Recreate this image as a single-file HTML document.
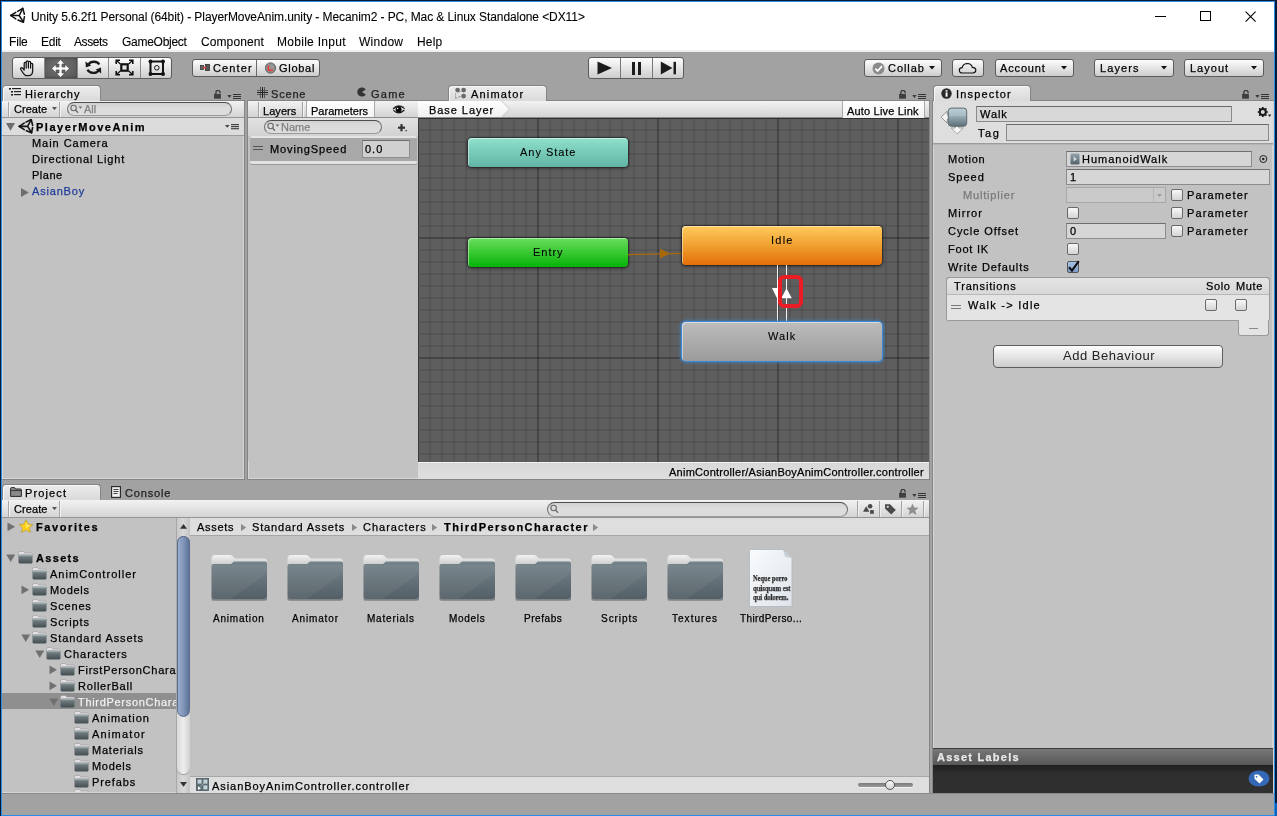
<!DOCTYPE html>
<html><head><meta charset="utf-8"><style>
html,body{margin:0;padding:0;width:1277px;height:816px;overflow:hidden;background:#a2a2a2}
body>div,body>span,body>svg{position:absolute;box-sizing:border-box}
.t{white-space:nowrap;line-height:normal;font-family:"Liberation Sans",sans-serif;will-change:transform;-webkit-text-stroke:0.25px currentColor}
</style></head><body>
<div style="left:0px;top:0px;width:1277px;height:816px;background:#0b1a2e"></div>
<div style="left:1px;top:1px;width:1274px;height:815px;background:#2a8be8"></div>
<div style="left:2px;top:2px;width:1272px;height:813px;background:#a2a2a2"></div>
<div style="left:1275px;top:0px;width:2px;height:816px;background:#031a38"></div>
<div style="left:1275px;top:803px;width:2px;height:13px;background:#0a62bd"></div>
<div style="left:2px;top:2px;width:1272px;height:48px;background:#ffffff"></div>
<div style="left:2px;top:50px;width:1272px;height:2px;background:#efefef"></div>
<svg style="left:9px;top:7px;" width="18" height="18" viewBox="0 0 18 18"><g fill="none" stroke="#111" stroke-width="1.5" stroke-linejoin="round" stroke-linecap="round"><path d="M8.6 4.4 L13.8 1.4 L15.4 7.3"/><path d="M15.4 9.8 L14.4 15.2 L9 13"/><path d="M6.8 11.9 L1.7 8.5 L6.8 5.3"/><path d="M1.7 8.5 H10.2 L13.8 1.4 M10.2 8.5 L14.4 15.2"/></g></svg>
<span class="t" style="left:31.00px;top:10px;font-size:12px;font-weight:400;color:#000;letter-spacing:-0.082px;-webkit-text-stroke:0.1px #000;">Unity 5.6.2f1 Personal (64bit) - PlayerMoveAnim.unity - Mecanim2 - PC, Mac &amp; Linux Standalone &lt;DX11&gt;</span>
<div style="left:1155px;top:16px;width:11px;height:1px;background:#000"></div>
<div style="left:1200px;top:11px;width:11px;height:10px;border:1px solid #000"></div>
<svg style="left:1245px;top:11px;" width="12" height="12" viewBox="0 0 12 12"><path d="M0.6 0.6 L10.6 10.6 M10.6 0.6 L0.6 10.6" stroke="#000" stroke-width="1.1"/></svg>
<span class="t" style="left:8.50px;top:35px;font-size:12px;font-weight:400;color:#000;letter-spacing:-0.181px;-webkit-text-stroke:0.1px #000;">File</span>
<span class="t" style="left:40.90px;top:35px;font-size:12px;font-weight:400;color:#000;letter-spacing:-0.257px;-webkit-text-stroke:0.1px #000;">Edit</span>
<span class="t" style="left:74.40px;top:35px;font-size:12px;font-weight:400;color:#000;letter-spacing:-0.420px;-webkit-text-stroke:0.1px #000;">Assets</span>
<span class="t" style="left:122.00px;top:35px;font-size:12px;font-weight:400;color:#000;letter-spacing:-0.272px;-webkit-text-stroke:0.1px #000;">GameObject</span>
<span class="t" style="left:200.50px;top:35px;font-size:12px;font-weight:400;color:#000;letter-spacing:0.096px;-webkit-text-stroke:0.1px #000;">Component</span>
<span class="t" style="left:276.90px;top:35px;font-size:12px;font-weight:400;color:#000;letter-spacing:0.286px;-webkit-text-stroke:0.1px #000;">Mobile Input</span>
<span class="t" style="left:359.00px;top:35px;font-size:12px;font-weight:400;color:#000;letter-spacing:0.262px;-webkit-text-stroke:0.1px #000;">Window</span>
<span class="t" style="left:416.60px;top:35px;font-size:12px;font-weight:400;color:#000;letter-spacing:0.204px;-webkit-text-stroke:0.1px #000;">Help</span>
<div style="left:12px;top:57px;width:160px;height:22px;border:1px solid #5c5c5c;border-radius:3px;background:linear-gradient(#fdfdfd,#cdcdcd);"></div>
<div style="left:44px;top:58px;width:33px;height:20px;background:radial-gradient(ellipse at 50% 45%,#747474,#5e5e5e 70%,#555);box-shadow:inset 0 0 2px #333"></div>
<div style="left:44px;top:58px;width:1px;height:20px;background:#8a8a8a"></div>
<div style="left:77px;top:58px;width:1px;height:20px;background:#8a8a8a"></div>
<div style="left:108px;top:58px;width:1px;height:20px;background:#8a8a8a"></div>
<div style="left:140px;top:58px;width:1px;height:20px;background:#8a8a8a"></div>
<svg style="left:19px;top:59px;" width="18" height="18" viewBox="0 0 18 18"><path d="M6.5 16.5 C5 15.5 3.2 13 1.8 10.5 C1 9.2 2.4 8 3.6 9.2 L5.2 11 L5.2 4.5 C5.2 3 7.2 3 7.2 4.5 L7.2 9 L7.2 3 C7.2 1.5 9.4 1.5 9.4 3 L9.4 9 L9.4 3.5 C9.4 2 11.6 2 11.6 3.5 L11.6 9 L11.6 5.3 C11.6 4 13.7 4 13.7 5.3 L13.7 11 C13.7 14 12.7 16.5 10.2 16.5 Z" fill="none" stroke="#141414" stroke-width="1.25" stroke-linejoin="round"/></svg>
<svg style="left:51px;top:59px;" width="19" height="19" viewBox="0 0 19 19"><path d="M9.5 0.6 L13.8 5 L11 5 L11 8 L14 8 L14 5.2 L18.4 9.5 L14 13.8 L14 11 L11 11 L11 14 L13.8 14 L9.5 18.4 L5.2 14 L8 14 L8 11 L5 11 L5 13.8 L0.6 9.5 L5 5.2 L5 8 L8 8 L8 5 L5.2 5 Z" fill="#fafafa" stroke="#3c3c3c" stroke-width="0.6"/></svg>
<svg style="left:85px;top:60px;" width="17" height="15" viewBox="0 0 17 15"><g fill="none" stroke="#1a1a1a" stroke-width="2.3"><path d="M14.2 4.6 C12.6 1.2 5.8 0.4 3.4 4.6"/><path d="M2.6 9.6 C4.2 13.6 11.6 14.2 13.6 10.2"/></g><path d="M0.4 1.6 L0.9 7.4 L6.2 5.6 Z" fill="#1a1a1a"/><path d="M16.2 13.6 L16 7.6 L10.8 9.6 Z" fill="#1a1a1a"/></svg>
<svg style="left:115px;top:59px;" width="19" height="17" viewBox="0 0 19 17"><rect x="6.3" y="5.3" width="6.4" height="6.4" fill="#e4e4e4" stroke="#111" stroke-width="2.2"/><g stroke="#111" stroke-width="1.3" fill="none"><path d="M2 2 L5.4 5"/><path d="M17 2 L13.6 5"/><path d="M2 15 L5.4 12"/><path d="M17 15 L13.6 12"/></g><g stroke="#111" stroke-width="1.6" fill="none"><path d="M1.2 5 V1.2 H5"/><path d="M14 1.2 H17.8 V5"/><path d="M1.2 12 V15.8 H5"/><path d="M14 15.8 H17.8 V12"/></g></svg>
<svg style="left:148px;top:59px;" width="18" height="18" viewBox="0 0 18 18"><g stroke="#111" stroke-width="2" fill="none"><path d="M2.5 2.5 H15"/><path d="M2.5 15 H15"/><path d="M2.5 2.5 V15"/><path d="M15 2.5 V15"/></g><circle cx="8.8" cy="8.8" r="2.3" fill="none" stroke="#111" stroke-width="1"/><g fill="#111"><circle cx="2.5" cy="2.5" r="2"/><circle cx="15" cy="2.5" r="2"/><circle cx="2.5" cy="15" r="2"/><circle cx="15" cy="15" r="2"/></g></svg>
<div style="left:192px;top:59px;width:128px;height:18px;border:1px solid #5c5c5c;border-radius:3px;background:linear-gradient(#fdfdfd,#cdcdcd);"></div>
<div style="left:256px;top:60px;width:1px;height:16px;background:#6a6a6a"></div>
<svg style="left:200px;top:64px;" width="10" height="7" viewBox="0 0 10 7"><rect x="0.5" y="1.5" width="3" height="4" fill="#666" stroke="#333" stroke-width="0.8"/><rect x="5.5" y="0.4" width="4" height="6.2" fill="#555" stroke="#333" stroke-width="0.8"/><rect x="3.4" y="2.8" width="2.6" height="1.6" fill="#e33"/></svg>
<span class="t" style="left:212.50px;top:62px;font-size:11px;font-weight:400;color:#000;letter-spacing:1.114px;">Center</span>
<svg style="left:265px;top:62px;" width="12" height="12" viewBox="0 0 12 12"><circle cx="5.5" cy="6" r="5.2" fill="#8a8a8a" stroke="#555" stroke-width="0.8"/><path d="M2 4 H9 M2 6 H9 M2 8 H9 M4 1.5 V10.5 M7 1.5 V10.5" stroke="#aaa" stroke-width="0.5"/><path d="M3.4 3.2 V8.2 H8" fill="none" stroke="#e33" stroke-width="1.4"/></svg>
<span class="t" style="left:279.30px;top:62px;font-size:11px;font-weight:400;color:#000;letter-spacing:0.718px;">Global</span>
<div style="left:588px;top:57px;width:96px;height:22px;border:1px solid #5c5c5c;border-radius:3px;background:linear-gradient(#fdfdfd,#cdcdcd);"></div>
<div style="left:620px;top:58px;width:1px;height:20px;background:#777"></div>
<div style="left:652px;top:58px;width:1px;height:20px;background:#777"></div>
<svg style="left:596px;top:60px;" width="18" height="16" viewBox="0 0 18 16"><path d="M1.5 1.5 L16 8 L1.5 14.5 Z" fill="#1c1c1c"/></svg>
<div style="left:632px;top:62px;width:3px;height:13px;background:#1c1c1c"></div>
<div style="left:638px;top:62px;width:3px;height:13px;background:#1c1c1c"></div>
<svg style="left:660px;top:60px;" width="17" height="16" viewBox="0 0 17 16"><path d="M0.8 1.5 L12.5 8 L0.8 14.5 Z" fill="#1c1c1c"/><rect x="13.5" y="1.8" width="2.5" height="12.5" fill="#1c1c1c"/></svg>
<div style="left:864px;top:59px;width:78px;height:18px;border:1px solid #5c5c5c;border-radius:3px;background:linear-gradient(#fdfdfd,#cdcdcd);"></div>
<svg style="left:872px;top:62px;" width="13" height="13" viewBox="0 0 13 13"><circle cx="6.5" cy="6.5" r="6" fill="#8a8a8a"/><path d="M3.3 6.6 L5.6 9 L10 4.2" fill="none" stroke="#fff" stroke-width="1.8"/></svg>
<span class="t" style="left:887.80px;top:62px;font-size:11px;font-weight:400;color:#000;letter-spacing:0.943px;">Collab</span>
<svg style="left:929px;top:66px;" width="6" height="4" viewBox="0 0 6 4"><path d="M0 0 H6 L3 3.5 Z" fill="#111"/></svg>
<div style="left:952px;top:59px;width:32px;height:18px;border:1px solid #5c5c5c;border-radius:3px;background:linear-gradient(#fdfdfd,#cdcdcd);"></div>
<svg style="left:958px;top:61px;" width="20" height="14" viewBox="0 0 20 14"><path d="M4.5 12 Q1.2 12 1.3 9 Q1.5 6.6 4.2 6.6 Q5 2.5 9.5 2.5 Q13.5 2.6 14.3 6.4 Q17.8 6.6 17.8 9.3 Q17.6 12 14.8 12 Z" fill="none" stroke="#111" stroke-width="1.2"/></svg>
<div style="left:995px;top:59px;width:79px;height:18px;border:1px solid #5c5c5c;border-radius:3px;background:linear-gradient(#fdfdfd,#cdcdcd);"></div>
<span class="t" style="left:1000.40px;top:62px;font-size:11px;font-weight:400;color:#000;letter-spacing:0.853px;">Account</span>
<svg style="left:1061px;top:66px;" width="6" height="4" viewBox="0 0 6 4"><path d="M0 0 H6 L3 3.5 Z" fill="#111"/></svg>
<div style="left:1094px;top:59px;width:80px;height:18px;border:1px solid #5c5c5c;border-radius:3px;background:linear-gradient(#fdfdfd,#cdcdcd);"></div>
<span class="t" style="left:1099.50px;top:62px;font-size:11px;font-weight:400;color:#000;letter-spacing:1.074px;">Layers</span>
<svg style="left:1161px;top:66px;" width="6" height="4" viewBox="0 0 6 4"><path d="M0 0 H6 L3 3.5 Z" fill="#111"/></svg>
<div style="left:1184px;top:59px;width:80px;height:18px;border:1px solid #5c5c5c;border-radius:3px;background:linear-gradient(#fdfdfd,#cdcdcd);"></div>
<span class="t" style="left:1190.00px;top:62px;font-size:11px;font-weight:400;color:#000;letter-spacing:1.007px;">Layout</span>
<svg style="left:1251px;top:66px;" width="6" height="4" viewBox="0 0 6 4"><path d="M0 0 H6 L3 3.5 Z" fill="#111"/></svg>
<div style="left:1px;top:100px;width:244px;height:380px;background:#858585"></div>
<div style="left:2px;top:101px;width:242px;height:378px;background:#d6d6d6"></div>
<div style="left:3px;top:102px;width:240px;height:376px;background:#c2c2c2"></div>
<div style="left:2px;top:101px;width:242px;height:16px;background:linear-gradient(#f2f2f2,#d4d4d4);"></div>
<div style="left:2px;top:117px;width:242px;height:1px;background:#959595"></div>
<div style="left:2px;top:85px;width:99px;height:16px;background:linear-gradient(#ececec,#dadada);border:1px solid #858585;border-bottom:none;border-radius:4px 4px 0 0;box-shadow:inset 1px 1px 0 #f8f8f8"></div>
<div style="left:247px;top:100px;width:683px;height:380px;background:#858585"></div>
<div style="left:248px;top:101px;width:681px;height:378px;background:#d6d6d6"></div>
<div style="left:249px;top:102px;width:679px;height:376px;background:#c2c2c2"></div>
<div style="left:932px;top:100px;width:342px;height:694px;background:#858585"></div>
<div style="left:933px;top:101px;width:340px;height:692px;background:#d6d6d6"></div>
<div style="left:934px;top:102px;width:338px;height:690px;background:#c2c2c2"></div>
<div style="left:1273px;top:101px;width:1px;height:692px;background:#d8d0c8"></div>
<div style="left:1px;top:500px;width:929px;height:294px;background:#858585"></div>
<div style="left:2px;top:501px;width:927px;height:292px;background:#d6d6d6"></div>
<div style="left:3px;top:502px;width:925px;height:290px;background:#c2c2c2"></div>
<svg style="left:9px;top:88px;" width="13" height="9" viewBox="0 0 13 9"><g fill="#222"><rect x="0" y="0" width="2" height="1.6"/><rect x="3" y="0" width="9" height="1.2"/><rect x="2" y="3" width="2" height="1.6"/><rect x="5" y="3" width="7" height="1.2"/><rect x="2" y="6" width="2" height="1.6"/><rect x="5" y="6" width="7" height="1.2"/></g></svg>
<span class="t" style="left:24.90px;top:88px;font-size:11px;font-weight:400;color:#000;letter-spacing:0.917px;">Hierarchy</span>
<svg style="left:214px;top:90px;" width="9" height="10" viewBox="0 0 9 10"><path d="M1.9 4 V2.6 Q1.9 0.4 4 0.4 Q6.1 0.4 6.1 2.6 V3.3" fill="none" stroke="#3a3a3a" stroke-width="1.3"/><rect x="0.1" y="3.9" width="6.8" height="4.8" fill="#3f3f3f"/></svg>
<svg style="left:227px;top:94px;" width="15" height="6" viewBox="0 0 15 6"><path d="M0.3 1 H4.5 L2.4 3.9 Z" fill="#3a3a3a"/><rect x="6" y="0" width="8" height="1" fill="#333"/><rect x="6" y="2" width="8" height="1" fill="#333"/><rect x="6" y="4" width="8" height="1" fill="#333"/></svg>
<svg style="left:257px;top:87px;" width="12" height="11" viewBox="0 0 12 11"><g fill="#555"><rect x="3" y="0" width="1" height="11"/><rect x="7" y="0" width="1" height="11"/><rect x="0" y="3" width="11" height="1"/><rect x="0" y="7" width="11" height="1"/></g><g fill="#222"><rect x="5" y="0" width="1" height="11"/><rect x="0" y="5" width="11" height="1"/></g></svg>
<span class="t" style="left:271.10px;top:88px;font-size:11px;font-weight:400;color:#222;letter-spacing:0.820px;">Scene</span>
<svg style="left:357px;top:87px;" width="10" height="10" viewBox="0 0 10 10"><path d="M8.8 2.6 A4.6 4.6 0 1 0 8.8 7.4 L5 5 Z" fill="#333"/></svg>
<span class="t" style="left:371.00px;top:88px;font-size:11px;font-weight:400;color:#222;letter-spacing:1.244px;">Game</span>
<div style="left:448px;top:85px;width:99px;height:16px;background:linear-gradient(#ececec,#dadada);border:1px solid #858585;border-bottom:none;border-radius:4px 4px 0 0;box-shadow:inset 1px 1px 0 #f8f8f8"></div>
<svg style="left:455px;top:87px;" width="13" height="12" viewBox="0 0 13 12"><g fill="#6a6a6a"><circle cx="2.6" cy="3.1" r="2.4"/><circle cx="8.6" cy="3.1" r="2.4"/><circle cx="8.6" cy="9.1" r="2.4"/></g><path d="M0.6 6 L0.6 11.6 L5.3 8.8" fill="none" stroke="#777" stroke-width="0.8" stroke-dasharray="1 0.6"/><path d="M3.5 5.8 L6.5 3.6 M3.8 11 L6 9" stroke="#999" stroke-width="0.7"/></svg>
<span class="t" style="left:471.10px;top:88px;font-size:11px;font-weight:400;color:#000;letter-spacing:1.167px;">Animator</span>
<svg style="left:899px;top:90px;" width="9" height="10" viewBox="0 0 9 10"><path d="M1.9 4 V2.6 Q1.9 0.4 4 0.4 Q6.1 0.4 6.1 2.6 V3.3" fill="none" stroke="#3a3a3a" stroke-width="1.3"/><rect x="0.1" y="3.9" width="6.8" height="4.8" fill="#3f3f3f"/></svg>
<svg style="left:912px;top:94px;" width="15" height="6" viewBox="0 0 15 6"><path d="M0.3 1 H4.5 L2.4 3.9 Z" fill="#3a3a3a"/><rect x="6" y="0" width="8" height="1" fill="#333"/><rect x="6" y="2" width="8" height="1" fill="#333"/><rect x="6" y="4" width="8" height="1" fill="#333"/></svg>
<div style="left:933px;top:85px;width:98px;height:16px;background:linear-gradient(#ececec,#dadada);border:1px solid #858585;border-bottom:none;border-radius:4px 4px 0 0;box-shadow:inset 1px 1px 0 #f8f8f8"></div>
<svg style="left:941px;top:88px;" width="11" height="11" viewBox="0 0 11 11"><circle cx="5.5" cy="5.5" r="5.2" fill="#2a2a2a"/><rect x="4.6" y="4.4" width="1.9" height="4.3" fill="#fff"/><rect x="4.6" y="2.2" width="1.9" height="1.5" fill="#fff"/></svg>
<span class="t" style="left:955.80px;top:88px;font-size:11px;font-weight:400;color:#000;letter-spacing:1.177px;">Inspector</span>
<svg style="left:1242px;top:90px;" width="9" height="10" viewBox="0 0 9 10"><path d="M1.9 4 V2.6 Q1.9 0.4 4 0.4 Q6.1 0.4 6.1 2.6 V3.3" fill="none" stroke="#3a3a3a" stroke-width="1.3"/><rect x="0.1" y="3.9" width="6.8" height="4.8" fill="#3f3f3f"/></svg>
<svg style="left:1255px;top:94px;" width="15" height="6" viewBox="0 0 15 6"><path d="M0.3 1 H4.5 L2.4 3.9 Z" fill="#3a3a3a"/><rect x="6" y="0" width="8" height="1" fill="#333"/><rect x="6" y="2" width="8" height="1" fill="#333"/><rect x="6" y="4" width="8" height="1" fill="#333"/></svg>
<div style="left:8px;top:102px;width:1px;height:15px;background:#a6a6a6"></div>
<div style="left:9px;top:102px;width:1px;height:15px;background:#f4f4f4"></div>
<span class="t" style="left:13.50px;top:103px;font-size:11px;font-weight:400;color:#000;letter-spacing:0.034px;">Create</span>
<svg style="left:52px;top:107px;" width="6" height="4" viewBox="0 0 6 4"><path d="M0 0 H5 L2.5 3.2 Z" fill="#555"/></svg>
<div style="left:59px;top:102px;width:1px;height:15px;background:#a6a6a6"></div>
<div style="left:60px;top:102px;width:1px;height:15px;background:#f4f4f4"></div>
<div style="left:67px;top:102px;width:165px;height:14px;border-radius:7.0px;background:linear-gradient(#d2d2d2,#dcdcdc 40%,#dddddd);border:1px solid #6e6e6e;border-top-color:#4e4e4e;border-bottom-color:#9a9a9a"></div>
<svg style="left:70px;top:103px;" width="14" height="12" viewBox="0 0 14 12"><circle cx="3.6" cy="5" r="2.7" fill="none" stroke="#6a6a6a" stroke-width="1.1"/><path d="M5.5 7 L8 9.8" stroke="#6a6a6a" stroke-width="1.3"/><path d="M8.6 3.4 H12.2 L10.4 5.8 Z" fill="#6a6a6a"/></svg>
<span class="t" style="left:83.50px;top:103px;font-size:11px;font-weight:400;color:#808080;">All</span>
<div style="left:2px;top:118px;width:242px;height:17px;background:#dcdcdc"></div>
<div style="left:2px;top:135px;width:242px;height:1px;background:#9a9a9a"></div>
<svg style="left:6px;top:123px;" width="10" height="8" viewBox="0 0 10 8"><path d="M0 0 H9 L4.5 7.8 Z" fill="#6e6e6e"/></svg>
<svg style="left:18px;top:119px;" width="16" height="15" viewBox="0 0 16 15"><g transform="translate(-0.6,-1.3) scale(1.0)"><g fill="none" stroke="#111" stroke-width="1.6" stroke-linejoin="round" stroke-linecap="round"><path d="M8.6 4.4 L13.8 1.8 L15.2 7.6"/><path d="M15.2 9.8 L14.2 15 L9 13"/><path d="M6.8 11.9 L1.8 8.7 L6.8 5.4"/><path d="M1.8 8.7 H10.2 L13.8 1.8 M10.2 8.7 L14.2 15"/></g></g></svg>
<span class="t" style="left:35.80px;top:121px;font-size:11px;font-weight:700;color:#000;letter-spacing:1.532px;">PlayerMoveAnim</span>
<svg style="left:225px;top:124px;" width="15" height="6" viewBox="0 0 15 6"><path d="M0 1 H4.6 L2.3 3.8 Z" fill="#444"/><rect x="6" y="0" width="8" height="1.2" fill="#444"/><rect x="6" y="2" width="8" height="1.2" fill="#444"/><rect x="6" y="4.1" width="8" height="1.2" fill="#444"/></svg>
<span class="t" style="left:32.00px;top:137px;font-size:11px;font-weight:400;color:#000;letter-spacing:0.957px;">Main Camera</span>
<span class="t" style="left:32.00px;top:153px;font-size:11px;font-weight:400;color:#000;letter-spacing:0.837px;">Directional Light</span>
<span class="t" style="left:32.00px;top:169px;font-size:11px;font-weight:400;color:#000;letter-spacing:0.511px;">Plane</span>
<svg style="left:21px;top:188px;" width="8" height="9" viewBox="0 0 8 9"><path d="M0 0 L7.8 4.5 L0 9 Z" fill="#6e6e6e"/></svg>
<span class="t" style="left:32.00px;top:185px;font-size:11px;font-weight:400;color:#1e3c99;letter-spacing:0.814px;">AsianBoy</span>
<div style="left:248px;top:101px;width:681px;height:16px;background:linear-gradient(#f2f2f2,#d4d4d4);"></div>
<div style="left:248px;top:117px;width:681px;height:1px;background:#8e8e8e"></div>
<div style="left:258px;top:102px;width:1px;height:15px;background:#a2a2a2"></div>
<div style="left:259px;top:102px;width:1px;height:15px;background:#f2f2f2"></div>
<span class="t" style="left:263.20px;top:105px;font-size:11px;font-weight:400;color:#000;letter-spacing:0.054px;">Layers</span>
<div style="left:302px;top:102px;width:1px;height:15px;background:#a2a2a2"></div>
<div style="left:303px;top:102px;width:1px;height:15px;background:#f2f2f2"></div>
<div style="left:306px;top:101px;width:69px;height:16px;background:linear-gradient(#ffffff,#f4f4f4);border-left:1px solid #a8a8a8;border-right:1px solid #a8a8a8"></div>
<span class="t" style="left:311.20px;top:105px;font-size:11px;font-weight:400;color:#000;letter-spacing:0.025px;">Parameters</span>
<svg style="left:392px;top:104px;" width="14" height="11" viewBox="0 0 14 11"><path d="M1 5.2 Q6.5 -0.6 12.6 4.6" fill="none" stroke="#111" stroke-width="1.2"/><path d="M1.6 3.6 Q6.5 0.2 12 3.2" fill="none" stroke="#333" stroke-width="0.7"/><path d="M1.4 6.4 Q6.8 11.4 12.4 6" fill="none" stroke="#111" stroke-width="1.1"/><circle cx="6.6" cy="5.4" r="3" fill="#0a0a0a"/><circle cx="5.6" cy="4.5" r="0.8" fill="#fff"/></svg>
<div style="left:248px;top:118px;width:170px;height:343px;background:#c2c2c2"></div>
<div style="left:248px;top:118px;width:170px;height:18px;background:linear-gradient(#e2e2e2,#d2d2d2)"></div>
<div style="left:264px;top:120px;width:118px;height:14px;border-radius:7.0px;background:linear-gradient(#d2d2d2,#dcdcdc 40%,#dddddd);border:1px solid #6e6e6e;border-top-color:#4e4e4e;border-bottom-color:#9a9a9a"></div>
<svg style="left:267px;top:121px;" width="14" height="12" viewBox="0 0 14 12"><circle cx="3.6" cy="5" r="2.7" fill="none" stroke="#6a6a6a" stroke-width="1.1"/><path d="M5.5 7 L8 9.8" stroke="#6a6a6a" stroke-width="1.3"/><path d="M8.6 3.4 H12.2 L10.4 5.8 Z" fill="#6a6a6a"/></svg>
<span class="t" style="left:280.50px;top:121px;font-size:11px;font-weight:400;color:#808080;">Name</span>
<svg style="left:396px;top:122px;" width="12" height="12" viewBox="0 0 12 12"><rect x="2" y="4.6" width="7" height="2.2" fill="#333"/><rect x="4.4" y="2.1" width="2.2" height="7.2" fill="#333"/><rect x="9.4" y="8.1" width="1.6" height="1.1" fill="#333"/></svg>
<div style="left:250px;top:136px;width:167px;height:3px;background:#e4e4e4;border-radius:2px 2px 0 0"></div>
<div style="left:250px;top:138px;width:167px;height:23px;background:#a8a8a8"></div>
<div style="left:253px;top:146px;width:10px;height:1px;background:#555"></div>
<div style="left:253px;top:149px;width:10px;height:1px;background:#555"></div>
<span class="t" style="left:269.50px;top:143px;font-size:11px;font-weight:400;color:#000;letter-spacing:0.899px;">MovingSpeed</span>
<div style="left:362px;top:140px;width:48px;height:18px;background:#d0d0d0;border:1px solid #8c8c8c;border-top-color:#6c6c6c"></div>
<span class="t" style="left:365.00px;top:143px;font-size:11px;font-weight:400;color:#000;letter-spacing:0.994px;">0.0</span>
<div style="left:250px;top:161px;width:167px;height:3px;background:#e2e2e2;border-radius:0 0 2px 2px;box-shadow:0 1px 0 #9a9a9a"></div>
<svg style="left:418px;top:101px;" width="93" height="17" viewBox="0 0 93 17"><defs><linearGradient id="bl" x1="0" y1="0" x2="0" y2="1"><stop offset="0" stop-color="#ffffff"/><stop offset="1" stop-color="#f0f0f0"/></linearGradient></defs><path d="M0 0 H83.5 L91.5 8 L83.5 16 H0 Z" fill="url(#bl)"/><path d="M83.5 0 L91.5 8 L83.5 16" fill="none" stroke="#c8c8c8" stroke-width="1"/></svg>
<span class="t" style="left:428.80px;top:104px;font-size:11px;font-weight:400;color:#000;letter-spacing:0.946px;">Base Layer</span>
<div style="left:842px;top:101px;width:83px;height:17px;background:linear-gradient(#ffffff,#f3f3f3);border-left:1px solid #a8a8a8;border-right:1px solid #a8a8a8"></div>
<span class="t" style="left:847.20px;top:105px;font-size:11px;font-weight:400;color:#000;letter-spacing:0.180px;">Auto Live Link</span>
<div style="left:418px;top:118px;width:511px;height:344px;background-color:#5e5e5e;background-image:linear-gradient(90deg, rgba(0,0,0,0.18) 1px, transparent 1px, transparent 119px, rgba(0,0,0,0.18) 119px),linear-gradient(180deg, rgba(0,0,0,0.18) 1px, transparent 1px, transparent 119px, rgba(0,0,0,0.18) 119px),linear-gradient(90deg, rgba(0,0,0,0.09) 1px, transparent 1px, transparent 11px, rgba(0,0,0,0.09) 11px),linear-gradient(180deg, rgba(0,0,0,0.09) 1px, transparent 1px, transparent 11px, rgba(0,0,0,0.09) 11px);background-size:120px 120px,120px 120px,12px 12px,12px 12px;background-position:0 0, 0 0, 0 0, 0 0"></div>
<div style="left:418px;top:118px;width:511px;height:1px;background:#2e2e2e"></div>
<div style="left:418px;top:118px;width:1px;height:344px;background:#3a3a3a"></div>
<div style="left:418px;top:462px;width:511px;height:17px;background:linear-gradient(#d8d8d8,#dedede);border-top:1px solid #f2f2f2"></div>
<span class="t" style="left:669.40px;top:466px;font-size:11px;font-weight:400;color:#000;letter-spacing:0.254px;">AnimController/AsianBoyAnimController.controller</span>
<div style="left:468px;top:138px;width:160px;height:29px;border-radius:4px;box-shadow:0 0 1px 1px rgba(25,25,25,0.55),0 1px 3px 1px rgba(0,0,0,0.35)"></div>
<div style="left:468px;top:138px;width:160px;height:29px;border-radius:4px;background:linear-gradient(#8fe1cd,#62b4a4);box-shadow:inset 1px 1px 0 rgba(255,255,255,0.45)"></div>
<span class="t" style="left:520.10px;top:146px;font-size:11px;font-weight:400;color:#000;letter-spacing:0.969px;-webkit-text-stroke:0.1px #000;">Any State</span>
<div style="left:468px;top:238px;width:160px;height:29px;border-radius:4px;box-shadow:0 0 1px 1px rgba(25,25,25,0.55),0 1px 3px 1px rgba(0,0,0,0.35)"></div>
<div style="left:468px;top:238px;width:160px;height:29px;border-radius:4px;background:linear-gradient(#6ade5e,#06b306);box-shadow:inset 1px 1px 0 rgba(255,255,255,0.45)"></div>
<span class="t" style="left:533.00px;top:246px;font-size:11px;font-weight:400;color:#000;letter-spacing:0.978px;-webkit-text-stroke:0.1px #000;">Entry</span>
<svg style="left:627px;top:246px;" width="56" height="14" viewBox="0 0 56 14"><path d="M1 8.7 L55 7.3" stroke="#a86a08" stroke-width="1.3"/><path d="M33 2.7 L43 7.4 L33 12.6 Z" fill="#a86a08"/></svg>
<div style="left:682px;top:226px;width:200px;height:39px;border-radius:4px;box-shadow:0 0 1px 1px rgba(25,25,25,0.55),0 1px 3px 1px rgba(0,0,0,0.35)"></div>
<div style="left:682px;top:226px;width:200px;height:39px;border-radius:4px;background:linear-gradient(#ffcb5e,#f0a030 50%,#e46e08);box-shadow:inset 1px 1px 0 rgba(255,255,255,0.45)"></div>
<span class="t" style="left:771.30px;top:234px;font-size:11px;font-weight:400;color:#000;letter-spacing:1.250px;-webkit-text-stroke:0.1px #000;">Idle</span>
<div style="left:777px;top:265px;width:1px;height:57px;background:#f4f4f4"></div>
<div style="left:786px;top:265px;width:1px;height:57px;background:#f4f4f4"></div>
<svg style="left:770px;top:286px;" width="26" height="14" viewBox="0 0 26 14"><path d="M2 2 L12 2 L7 12.3 Z" fill="#fff"/><path d="M16.5 2.3 L21.8 12.3 L11.3 12.3 Z" fill="#fff"/></svg>
<div style="left:778px;top:275px;width:25px;height:33px;border:4.6px solid #ec1c24;border-radius:6px"></div>
<div style="left:681px;top:321px;width:202px;height:41px;border-radius:5px;background:#3b8ad9;box-shadow:0 0 3px 1px rgba(59,138,217,0.6)"></div>
<div style="left:682px;top:322px;width:200px;height:39px;border-radius:4px;background:linear-gradient(#bdbdbd,#9b9b9b);box-shadow:inset 1px 1px 0 rgba(255,255,255,0.45)"></div>
<span class="t" style="left:768.20px;top:330px;font-size:11px;font-weight:400;color:#000;letter-spacing:1.090px;-webkit-text-stroke:0.1px #000;">Walk</span>
<div style="left:933px;top:101px;width:340px;height:42px;background:#dedede"></div>
<div style="left:933px;top:143px;width:340px;height:1px;background:#9c9c9c"></div>
<div style="left:933px;top:144px;width:340px;height:1px;background:#b4b4b4"></div>
<svg style="left:936px;top:103px;" width="36" height="36" viewBox="0 0 36 36"><defs><linearGradient id="ig" x1="0" y1="0" x2="0" y2="1"><stop offset="0" stop-color="#bccfd8"/><stop offset="0.42" stop-color="#a6bac4"/><stop offset="0.48" stop-color="#93a7b1"/><stop offset="1" stop-color="#5d707a"/></linearGradient></defs><path d="M5.1 14.1 L11.2 8.2 L11.2 11.9 L13 11.9 L13 16.3 L11.2 16.3 L11.2 20.2 Z" fill="#f4f4f4" stroke="#8a8a8a" stroke-width="0.9" stroke-linejoin="round"/><path d="M21.2 30.9 L15.2 25 L19.4 25 L19.4 22.5 L22.9 22.5 L22.9 25 L27.3 25 Z" fill="#f8f8f8" stroke="#9a9a9a" stroke-width="0.9" stroke-linejoin="round"/><rect x="12.3" y="5.1" width="18.4" height="18.2" rx="3.2" fill="url(#ig)" stroke="#5e6a70" stroke-width="1"/></svg>
<div style="left:976px;top:106px;width:256px;height:16px;background:#d8d8d8;border:1px solid #8a8a8a;border-top-color:#6a6a6a"></div>
<span class="t" style="left:979.50px;top:108px;font-size:11px;font-weight:400;color:#000;letter-spacing:0.923px;">Walk</span>
<svg style="left:1256px;top:105px;" width="17" height="14" viewBox="0 0 17 14"><g transform="translate(6.8,7)"><circle r="3" fill="none" stroke="#1a1a1a" stroke-width="2"/><g stroke="#1a1a1a" stroke-width="1.7"><path d="M0 -5 V-3"/><path d="M0 5 V3"/><path d="M-5 0 H-3"/><path d="M5 0 H3"/><path d="M-3.6 -3.6 L-2 -2"/><path d="M3.6 3.6 L2 2"/><path d="M-3.6 3.6 L-2 2"/><path d="M3.6 -3.6 L2 -2"/></g></g><path d="M12 9.4 H15.2 L13.6 12 Z" fill="#1a1a1a"/></svg>
<span class="t" style="left:978.10px;top:127px;font-size:11px;font-weight:400;color:#000;letter-spacing:1.525px;">Tag</span>
<div style="left:1006px;top:124px;width:263px;height:17px;background:#d8d8d8;border:1px solid #8a8a8a;border-top-color:#6a6a6a"></div>
<span class="t" style="left:948.00px;top:153px;font-size:11px;font-weight:400;color:#000;letter-spacing:0.714px;">Motion</span>
<span class="t" style="left:948.00px;top:171px;font-size:11px;font-weight:400;color:#000;letter-spacing:0.989px;">Speed</span>
<span class="t" style="left:962.70px;top:189px;font-size:11px;font-weight:400;color:#7a7a7a;letter-spacing:0.811px;">Multiplier</span>
<span class="t" style="left:948.00px;top:207px;font-size:11px;font-weight:400;color:#000;letter-spacing:1.043px;">Mirror</span>
<span class="t" style="left:948.00px;top:225px;font-size:11px;font-weight:400;color:#000;letter-spacing:0.942px;">Cycle Offset</span>
<span class="t" style="left:948.00px;top:243px;font-size:11px;font-weight:400;color:#000;letter-spacing:0.783px;">Foot IK</span>
<span class="t" style="left:948.00px;top:261px;font-size:11px;font-weight:400;color:#000;letter-spacing:0.908px;">Write Defaults</span>
<div style="left:1066px;top:151px;width:186px;height:16px;background:#d6d6d6;border:1px solid #8c8c8c;border-top-color:#6e6e6e;"></div>
<svg style="left:1070px;top:153px;" width="10" height="12" viewBox="0 0 10 12"><defs><linearGradient id="mg" x1="0" y1="0" x2="0" y2="1"><stop offset="0" stop-color="#93a4ac"/><stop offset="1" stop-color="#52616a"/></linearGradient></defs><rect x="0.5" y="0.5" width="9" height="11" rx="1.3" fill="url(#mg)"/><path d="M3.6 3.4 L7 5.9 L3.6 8.4 Z" fill="#d2dadd"/></svg>
<span class="t" style="left:1081.50px;top:153px;font-size:11px;font-weight:400;color:#000;letter-spacing:1.001px;">HumanoidWalk</span>
<svg style="left:1258px;top:154px;" width="10" height="10" viewBox="0 0 10 10"><circle cx="5.3" cy="5" r="3.5" fill="none" stroke="#222" stroke-width="1"/><circle cx="5.3" cy="5" r="1.2" fill="#222"/></svg>
<div style="left:1066px;top:169px;width:204px;height:16px;background:#d6d6d6;border:1px solid #8c8c8c;border-top-color:#6e6e6e;"></div>
<span class="t" style="left:1069.50px;top:171px;font-size:11px;font-weight:400;color:#000;">1</span>
<div style="left:1066px;top:187px;width:100px;height:16px;background:#cacaca;border:1px solid #a8a8a8"></div>
<div style="left:1153px;top:188px;width:1px;height:14px;background:#b6b6b6"></div>
<svg style="left:1157px;top:194px;" width="6" height="4" viewBox="0 0 6 4"><path d="M0 0 H5 L2.5 3 Z" fill="#9a9a9a"/></svg>
<div style="left:1171px;top:189px;width:12px;height:12px;border-radius:2px;border:1px solid #6a6a6a;background:linear-gradient(#f8f8f8,#d4d4d4)"></div>
<span class="t" style="left:1186.70px;top:189px;font-size:11px;font-weight:400;color:#000;letter-spacing:1.153px;">Parameter</span>
<div style="left:1171px;top:207px;width:12px;height:12px;border-radius:2px;border:1px solid #6a6a6a;background:linear-gradient(#f8f8f8,#d4d4d4)"></div>
<span class="t" style="left:1186.70px;top:207px;font-size:11px;font-weight:400;color:#000;letter-spacing:1.153px;">Parameter</span>
<div style="left:1171px;top:225px;width:12px;height:12px;border-radius:2px;border:1px solid #6a6a6a;background:linear-gradient(#f8f8f8,#d4d4d4)"></div>
<span class="t" style="left:1186.70px;top:225px;font-size:11px;font-weight:400;color:#000;letter-spacing:1.153px;">Parameter</span>
<div style="left:1067px;top:207px;width:12px;height:12px;border-radius:2px;border:1px solid #6a6a6a;background:linear-gradient(#f8f8f8,#d4d4d4)"></div>
<div style="left:1066px;top:223px;width:100px;height:16px;background:#d6d6d6;border:1px solid #8c8c8c;border-top-color:#6e6e6e;"></div>
<span class="t" style="left:1069.50px;top:225px;font-size:11px;font-weight:400;color:#000;">0</span>
<div style="left:1067px;top:243px;width:12px;height:12px;border-radius:2px;border:1px solid #6a6a6a;background:linear-gradient(#f8f8f8,#d4d4d4)"></div>
<div style="left:1067px;top:261px;width:12px;height:12px;border-radius:2px;border:1px solid #555;background:linear-gradient(#a9c4ea,#7c9cc8)"></div>
<svg style="left:1066px;top:259px;" width="15" height="15" viewBox="0 0 15 15"><path d="M3 8.2 L6 11.6 L12.8 2.2" fill="none" stroke="#111" stroke-width="2.1"/></svg>
<div style="left:946px;top:277px;width:324px;height:44px;border-radius:3px;background:#9a9a9a"></div>
<div style="left:947px;top:278px;width:322px;height:16px;background:linear-gradient(#e4e4e4,#d8d8d8);border-radius:3px 3px 0 0"></div>
<div style="left:947px;top:294px;width:322px;height:26px;background:#e4e4e4"></div>
<div style="left:947px;top:294px;width:322px;height:1px;background:#b8b8b8"></div>
<span class="t" style="left:953.80px;top:280px;font-size:11px;font-weight:400;color:#000;letter-spacing:0.839px;">Transitions</span>
<span class="t" style="left:1206.30px;top:280px;font-size:11px;font-weight:400;color:#000;letter-spacing:0.656px;">Solo</span>
<span class="t" style="left:1236.30px;top:280px;font-size:11px;font-weight:400;color:#000;letter-spacing:0.610px;">Mute</span>
<div style="left:951px;top:305px;width:10px;height:1px;background:#777"></div>
<div style="left:951px;top:308px;width:10px;height:1px;background:#777"></div>
<span class="t" style="left:968.00px;top:299px;font-size:11px;font-weight:400;color:#000;letter-spacing:1.247px;">Walk -&gt; Idle</span>
<div style="left:1205px;top:299px;width:12px;height:12px;border-radius:2px;border:1px solid #6a6a6a;background:linear-gradient(#f8f8f8,#d4d4d4)"></div>
<div style="left:1235px;top:299px;width:12px;height:12px;border-radius:2px;border:1px solid #6a6a6a;background:linear-gradient(#f8f8f8,#d4d4d4)"></div>
<div style="left:1238px;top:320px;width:31px;height:16px;background:#e4e4e4;border:1px solid #9a9a9a;border-top:none;border-radius:0 0 3px 3px"></div>
<div style="left:1249px;top:328px;width:9px;height:1px;background:#8a8a8a"></div>
<div style="left:993px;top:345px;width:230px;height:23px;border:1px solid #5c5c5c;border-radius:3px;background:linear-gradient(#fdfdfd,#cdcdcd);border-radius:4px;border-color:#5e5e5e"></div>
<span class="t" style="left:1062.70px;top:348px;font-size:13px;font-weight:400;color:#222;letter-spacing:0.516px;-webkit-text-stroke:0;">Add Behaviour</span>
<div style="left:933px;top:748px;width:340px;height:1px;background:#3c3c3c"></div>
<div style="left:933px;top:749px;width:340px;height:16px;background:linear-gradient(#777777,#575757)"></div>
<span class="t" style="left:937.20px;top:751px;font-size:11px;font-weight:700;color:#e8e8e8;letter-spacing:1.245px;">Asset Labels</span>
<div style="left:933px;top:765px;width:340px;height:28px;background:linear-gradient(#1f1f1f,#2e2e2e 30%,#303030)"></div>
<svg style="left:1248px;top:770px;" width="22" height="17" viewBox="0 0 22 17"><ellipse cx="11" cy="8.5" rx="10.5" ry="8" fill="#3569b8"/><path d="M6.5 5.3 V8.8 L11.5 13.5 L15.5 9.5 L10.5 4.6 H7 Z" fill="#fff"/><circle cx="8.6" cy="6.8" r="0.9" fill="#3569b8"/></svg>
<div style="left:2px;top:484px;width:99px;height:16px;background:linear-gradient(#ececec,#dadada);border:1px solid #858585;border-bottom:none;border-radius:4px 4px 0 0;box-shadow:inset 1px 1px 0 #f8f8f8"></div>
<svg style="left:10px;top:487px;" width="12" height="10" viewBox="0 0 12 10"><path d="M0.6 9.4 V1.6 Q0.6 0.6 1.6 0.6 H4.6 L5.6 2 H10.4 Q11.4 2 11.4 3 V9.4 Z" fill="#8a8a8a" stroke="#2a2a2a" stroke-width="1"/><path d="M0.6 3.6 H11.4" stroke="#2a2a2a" stroke-width="0.9"/></svg>
<span class="t" style="left:24.50px;top:487px;font-size:11px;font-weight:400;color:#000;letter-spacing:1.125px;">Project</span>
<svg style="left:111px;top:486px;" width="10" height="12" viewBox="0 0 10 12"><rect x="0.6" y="0.6" width="8.8" height="10.8" fill="#eee" stroke="#222" stroke-width="1.1"/><g fill="#444"><rect x="2.5" y="3" width="5" height="1"/><rect x="2.5" y="5" width="5" height="1"/><rect x="2.5" y="7" width="4" height="1"/></g></svg>
<span class="t" style="left:125.20px;top:487px;font-size:11px;font-weight:400;color:#222;letter-spacing:0.821px;">Console</span>
<svg style="left:899px;top:489px;" width="9" height="10" viewBox="0 0 9 10"><path d="M1.9 4 V2.6 Q1.9 0.4 4 0.4 Q6.1 0.4 6.1 2.6 V3.3" fill="none" stroke="#3a3a3a" stroke-width="1.3"/><rect x="0.1" y="3.9" width="6.8" height="4.8" fill="#3f3f3f"/></svg>
<svg style="left:912px;top:493px;" width="15" height="6" viewBox="0 0 15 6"><path d="M0.3 1 H4.5 L2.4 3.9 Z" fill="#3a3a3a"/><rect x="6" y="0" width="8" height="1" fill="#333"/><rect x="6" y="2" width="8" height="1" fill="#333"/><rect x="6" y="4" width="8" height="1" fill="#333"/></svg>
<div style="left:2px;top:500px;width:927px;height:17px;background:linear-gradient(#f2f2f2,#d4d4d4);"></div>
<div style="left:2px;top:517px;width:927px;height:1px;background:#959595"></div>
<div style="left:8px;top:501px;width:1px;height:16px;background:#a6a6a6"></div>
<div style="left:9px;top:501px;width:1px;height:16px;background:#f4f4f4"></div>
<span class="t" style="left:14.10px;top:503px;font-size:11px;font-weight:400;color:#000;letter-spacing:0.074px;">Create</span>
<svg style="left:52px;top:507px;" width="6" height="4" viewBox="0 0 6 4"><path d="M0 0 H5 L2.5 3.2 Z" fill="#555"/></svg>
<div style="left:59px;top:501px;width:1px;height:16px;background:#a6a6a6"></div>
<div style="left:60px;top:501px;width:1px;height:16px;background:#f4f4f4"></div>
<div style="left:547px;top:502px;width:301px;height:15px;border-radius:7.5px;background:linear-gradient(#d2d2d2,#dcdcdc 40%,#dddddd);border:1px solid #6e6e6e;border-top-color:#4e4e4e;border-bottom-color:#9a9a9a"></div>
<svg style="left:550px;top:503px;" width="14" height="12" viewBox="0 0 14 12"><circle cx="3.6" cy="5" r="2.7" fill="none" stroke="#6a6a6a" stroke-width="1.1"/><path d="M5.5 7 L8 9.8" stroke="#6a6a6a" stroke-width="1.3"/></svg>
<div style="left:857px;top:501px;width:1px;height:16px;background:#a4a4a4"></div>
<div style="left:858px;top:501px;width:1px;height:16px;background:#f0f0f0"></div>
<div style="left:879px;top:501px;width:1px;height:16px;background:#a4a4a4"></div>
<div style="left:880px;top:501px;width:1px;height:16px;background:#f0f0f0"></div>
<div style="left:901px;top:501px;width:1px;height:16px;background:#a4a4a4"></div>
<div style="left:902px;top:501px;width:1px;height:16px;background:#f0f0f0"></div>
<div style="left:923px;top:501px;width:1px;height:16px;background:#a4a4a4"></div>
<div style="left:924px;top:501px;width:1px;height:16px;background:#f0f0f0"></div>
<svg style="left:862px;top:503px;" width="13" height="12" viewBox="0 0 13 12"><path d="M1 8.7 L7.4 8.7 L4.2 3.2 Z" fill="#4a4a4a"/><circle cx="8.1" cy="3.2" r="2.3" fill="#4a4a4a"/><rect x="8.1" y="7.1" width="3.7" height="3.7" fill="#4a4a4a"/></svg>
<svg style="left:884px;top:503px;" width="13" height="13" viewBox="0 0 13 13"><path d="M1 1.2 H6 L11.8 7 L7.2 11.6 L1.2 5.8 Z" fill="#4a4a4a"/><circle cx="3.8" cy="3.8" r="1.1" fill="#ddd"/></svg>
<svg style="left:906px;top:503px;" width="13" height="13" viewBox="0 0 13 13"><path d="M6.5 0.5 L8.2 4.6 L12.6 4.8 L9.2 7.6 L10.4 12 L6.5 9.6 L2.6 12 L3.8 7.6 L0.4 4.8 L4.8 4.6 Z" fill="#8e8e8e"/></svg>
<div style="left:2px;top:518px;width:174px;height:275px;background:#c2c2c2"></div>
<svg style="left:7px;top:522px;" width="9" height="10" viewBox="0 0 9 10"><path d="M0.5 0.5 L8 4.8 L0.5 9.2 Z" fill="#707070"/></svg>
<svg style="left:18px;top:519px;" width="16" height="14" viewBox="0 0 16 14"><path d="M8 0.8 L10.2 5.2 L15 5.6 L11.4 8.8 L12.5 13.4 L8 11 L3.5 13.4 L4.6 8.8 L1 5.6 L5.8 5.2 Z" fill="#ffd21a" stroke="#b89a3a" stroke-width="0.7"/><path d="M8 2.5 L9.5 6 L13 6.3 L8 9 Z" fill="#fff3a0" opacity="0.6"/></svg>
<span class="t" style="left:35.80px;top:521px;font-size:11px;font-weight:700;color:#000;letter-spacing:1.595px;">Favorites</span>
<svg style="left:6px;top:554px;" width="10" height="9" viewBox="0 0 10 9"><path d="M0.3 0.5 H9.2 L4.75 8 Z" fill="#707070"/></svg>
<svg style="left:18px;top:551px;" width="15" height="13" viewBox="0 0 15 13"><defs><linearGradient id="sf" x1="0" y1="0" x2="0" y2="1"><stop offset="0" stop-color="#7c888d"/><stop offset="1" stop-color="#434d52"/></linearGradient></defs><path d="M0.5 2 Q0.5 0.5 2 0.5 H5.5 L6.8 2 H13 Q14.5 2 14.5 3.5 V5 H0.5 Z" fill="#e2e2e2" stroke="#9a9a9a" stroke-width="0.6"/><rect x="0.5" y="3.6" width="14" height="9" rx="1.6" fill="url(#sf)"/><rect x="1.2" y="4.2" width="12.6" height="1" fill="#b8c4c8" opacity="0.7"/></svg>
<span class="t" style="left:35.80px;top:552px;font-size:11px;font-weight:700;color:#000;letter-spacing:1.321px;">Assets</span>
<div style="left:2px;top:693px;width:174px;height:16px;background:#8f8f8f"></div>
<svg style="left:32px;top:567px;" width="15" height="13" viewBox="0 0 15 13"><defs><linearGradient id="sf" x1="0" y1="0" x2="0" y2="1"><stop offset="0" stop-color="#7c888d"/><stop offset="1" stop-color="#434d52"/></linearGradient></defs><path d="M0.5 2 Q0.5 0.5 2 0.5 H5.5 L6.8 2 H13 Q14.5 2 14.5 3.5 V5 H0.5 Z" fill="#e2e2e2" stroke="#9a9a9a" stroke-width="0.6"/><rect x="0.5" y="3.6" width="14" height="9" rx="1.6" fill="url(#sf)"/><rect x="1.2" y="4.2" width="12.6" height="1" fill="#b8c4c8" opacity="0.7"/></svg>
<span class="t" style="left:49.70px;top:568px;font-size:11px;font-weight:400;color:#000;letter-spacing:1.019px;">AnimController</span>
<svg style="left:21px;top:585px;" width="9" height="10" viewBox="0 0 9 10"><path d="M0.5 0.5 L8 4.8 L0.5 9.2 Z" fill="#707070"/></svg>
<svg style="left:32px;top:583px;" width="15" height="13" viewBox="0 0 15 13"><defs><linearGradient id="sf" x1="0" y1="0" x2="0" y2="1"><stop offset="0" stop-color="#7c888d"/><stop offset="1" stop-color="#434d52"/></linearGradient></defs><path d="M0.5 2 Q0.5 0.5 2 0.5 H5.5 L6.8 2 H13 Q14.5 2 14.5 3.5 V5 H0.5 Z" fill="#e2e2e2" stroke="#9a9a9a" stroke-width="0.6"/><rect x="0.5" y="3.6" width="14" height="9" rx="1.6" fill="url(#sf)"/><rect x="1.2" y="4.2" width="12.6" height="1" fill="#b8c4c8" opacity="0.7"/></svg>
<span class="t" style="left:49.70px;top:584px;font-size:11px;font-weight:400;color:#000;letter-spacing:0.686px;">Models</span>
<svg style="left:32px;top:599px;" width="15" height="13" viewBox="0 0 15 13"><defs><linearGradient id="sf" x1="0" y1="0" x2="0" y2="1"><stop offset="0" stop-color="#7c888d"/><stop offset="1" stop-color="#434d52"/></linearGradient></defs><path d="M0.5 2 Q0.5 0.5 2 0.5 H5.5 L6.8 2 H13 Q14.5 2 14.5 3.5 V5 H0.5 Z" fill="#e2e2e2" stroke="#9a9a9a" stroke-width="0.6"/><rect x="0.5" y="3.6" width="14" height="9" rx="1.6" fill="url(#sf)"/><rect x="1.2" y="4.2" width="12.6" height="1" fill="#b8c4c8" opacity="0.7"/></svg>
<span class="t" style="left:49.70px;top:600px;font-size:11px;font-weight:400;color:#000;letter-spacing:0.836px;">Scenes</span>
<svg style="left:32px;top:615px;" width="15" height="13" viewBox="0 0 15 13"><defs><linearGradient id="sf" x1="0" y1="0" x2="0" y2="1"><stop offset="0" stop-color="#7c888d"/><stop offset="1" stop-color="#434d52"/></linearGradient></defs><path d="M0.5 2 Q0.5 0.5 2 0.5 H5.5 L6.8 2 H13 Q14.5 2 14.5 3.5 V5 H0.5 Z" fill="#e2e2e2" stroke="#9a9a9a" stroke-width="0.6"/><rect x="0.5" y="3.6" width="14" height="9" rx="1.6" fill="url(#sf)"/><rect x="1.2" y="4.2" width="12.6" height="1" fill="#b8c4c8" opacity="0.7"/></svg>
<span class="t" style="left:49.70px;top:616px;font-size:11px;font-weight:400;color:#000;letter-spacing:0.879px;">Scripts</span>
<svg style="left:21px;top:634px;" width="10" height="9" viewBox="0 0 10 9"><path d="M0.3 0.5 H9.2 L4.75 8 Z" fill="#707070"/></svg>
<svg style="left:32px;top:631px;" width="15" height="13" viewBox="0 0 15 13"><defs><linearGradient id="sf" x1="0" y1="0" x2="0" y2="1"><stop offset="0" stop-color="#7c888d"/><stop offset="1" stop-color="#434d52"/></linearGradient></defs><path d="M0.5 2 Q0.5 0.5 2 0.5 H5.5 L6.8 2 H13 Q14.5 2 14.5 3.5 V5 H0.5 Z" fill="#e2e2e2" stroke="#9a9a9a" stroke-width="0.6"/><rect x="0.5" y="3.6" width="14" height="9" rx="1.6" fill="url(#sf)"/><rect x="1.2" y="4.2" width="12.6" height="1" fill="#b8c4c8" opacity="0.7"/></svg>
<span class="t" style="left:49.70px;top:632px;font-size:11px;font-weight:400;color:#000;letter-spacing:0.923px;">Standard Assets</span>
<svg style="left:35px;top:650px;" width="10" height="9" viewBox="0 0 10 9"><path d="M0.3 0.5 H9.2 L4.75 8 Z" fill="#707070"/></svg>
<svg style="left:46px;top:647px;" width="15" height="13" viewBox="0 0 15 13"><defs><linearGradient id="sf" x1="0" y1="0" x2="0" y2="1"><stop offset="0" stop-color="#7c888d"/><stop offset="1" stop-color="#434d52"/></linearGradient></defs><path d="M0.5 2 Q0.5 0.5 2 0.5 H5.5 L6.8 2 H13 Q14.5 2 14.5 3.5 V5 H0.5 Z" fill="#e2e2e2" stroke="#9a9a9a" stroke-width="0.6"/><rect x="0.5" y="3.6" width="14" height="9" rx="1.6" fill="url(#sf)"/><rect x="1.2" y="4.2" width="12.6" height="1" fill="#b8c4c8" opacity="0.7"/></svg>
<span class="t" style="left:63.70px;top:648px;font-size:11px;font-weight:400;color:#000;letter-spacing:0.999px;">Characters</span>
<svg style="left:49px;top:665px;" width="9" height="10" viewBox="0 0 9 10"><path d="M0.5 0.5 L8 4.8 L0.5 9.2 Z" fill="#707070"/></svg>
<svg style="left:60px;top:663px;" width="15" height="13" viewBox="0 0 15 13"><defs><linearGradient id="sf" x1="0" y1="0" x2="0" y2="1"><stop offset="0" stop-color="#7c888d"/><stop offset="1" stop-color="#434d52"/></linearGradient></defs><path d="M0.5 2 Q0.5 0.5 2 0.5 H5.5 L6.8 2 H13 Q14.5 2 14.5 3.5 V5 H0.5 Z" fill="#e2e2e2" stroke="#9a9a9a" stroke-width="0.6"/><rect x="0.5" y="3.6" width="14" height="9" rx="1.6" fill="url(#sf)"/><rect x="1.2" y="4.2" width="12.6" height="1" fill="#b8c4c8" opacity="0.7"/></svg>
<span class="t" style="left:77.70px;top:664px;font-size:11px;font-weight:400;color:#000;letter-spacing:0.759px;">FirstPersonChara</span>
<svg style="left:49px;top:681px;" width="9" height="10" viewBox="0 0 9 10"><path d="M0.5 0.5 L8 4.8 L0.5 9.2 Z" fill="#707070"/></svg>
<svg style="left:60px;top:679px;" width="15" height="13" viewBox="0 0 15 13"><defs><linearGradient id="sf" x1="0" y1="0" x2="0" y2="1"><stop offset="0" stop-color="#7c888d"/><stop offset="1" stop-color="#434d52"/></linearGradient></defs><path d="M0.5 2 Q0.5 0.5 2 0.5 H5.5 L6.8 2 H13 Q14.5 2 14.5 3.5 V5 H0.5 Z" fill="#e2e2e2" stroke="#9a9a9a" stroke-width="0.6"/><rect x="0.5" y="3.6" width="14" height="9" rx="1.6" fill="url(#sf)"/><rect x="1.2" y="4.2" width="12.6" height="1" fill="#b8c4c8" opacity="0.7"/></svg>
<span class="t" style="left:77.70px;top:680px;font-size:11px;font-weight:400;color:#000;letter-spacing:0.793px;">RollerBall</span>
<svg style="left:49px;top:698px;" width="10" height="9" viewBox="0 0 10 9"><path d="M0.3 0.5 H9.2 L4.75 8 Z" fill="#707070"/></svg>
<svg style="left:60px;top:695px;" width="15" height="13" viewBox="0 0 15 13"><defs><linearGradient id="sf" x1="0" y1="0" x2="0" y2="1"><stop offset="0" stop-color="#7c888d"/><stop offset="1" stop-color="#434d52"/></linearGradient></defs><path d="M0.5 2 Q0.5 0.5 2 0.5 H5.5 L6.8 2 H13 Q14.5 2 14.5 3.5 V5 H0.5 Z" fill="#e2e2e2" stroke="#9a9a9a" stroke-width="0.6"/><rect x="0.5" y="3.6" width="14" height="9" rx="1.6" fill="url(#sf)"/><rect x="1.2" y="4.2" width="12.6" height="1" fill="#b8c4c8" opacity="0.7"/></svg>
<span class="t" style="left:77.70px;top:696px;font-size:11px;font-weight:400;color:#f0f0f0;letter-spacing:0.693px;">ThirdPersonChara</span>
<svg style="left:74px;top:711px;" width="15" height="13" viewBox="0 0 15 13"><defs><linearGradient id="sf" x1="0" y1="0" x2="0" y2="1"><stop offset="0" stop-color="#7c888d"/><stop offset="1" stop-color="#434d52"/></linearGradient></defs><path d="M0.5 2 Q0.5 0.5 2 0.5 H5.5 L6.8 2 H13 Q14.5 2 14.5 3.5 V5 H0.5 Z" fill="#e2e2e2" stroke="#9a9a9a" stroke-width="0.6"/><rect x="0.5" y="3.6" width="14" height="9" rx="1.6" fill="url(#sf)"/><rect x="1.2" y="4.2" width="12.6" height="1" fill="#b8c4c8" opacity="0.7"/></svg>
<span class="t" style="left:91.70px;top:712px;font-size:11px;font-weight:400;color:#000;letter-spacing:1.008px;">Animation</span>
<svg style="left:74px;top:727px;" width="15" height="13" viewBox="0 0 15 13"><defs><linearGradient id="sf" x1="0" y1="0" x2="0" y2="1"><stop offset="0" stop-color="#7c888d"/><stop offset="1" stop-color="#434d52"/></linearGradient></defs><path d="M0.5 2 Q0.5 0.5 2 0.5 H5.5 L6.8 2 H13 Q14.5 2 14.5 3.5 V5 H0.5 Z" fill="#e2e2e2" stroke="#9a9a9a" stroke-width="0.6"/><rect x="0.5" y="3.6" width="14" height="9" rx="1.6" fill="url(#sf)"/><rect x="1.2" y="4.2" width="12.6" height="1" fill="#b8c4c8" opacity="0.7"/></svg>
<span class="t" style="left:91.70px;top:728px;font-size:11px;font-weight:400;color:#000;letter-spacing:1.238px;">Animator</span>
<svg style="left:74px;top:743px;" width="15" height="13" viewBox="0 0 15 13"><defs><linearGradient id="sf" x1="0" y1="0" x2="0" y2="1"><stop offset="0" stop-color="#7c888d"/><stop offset="1" stop-color="#434d52"/></linearGradient></defs><path d="M0.5 2 Q0.5 0.5 2 0.5 H5.5 L6.8 2 H13 Q14.5 2 14.5 3.5 V5 H0.5 Z" fill="#e2e2e2" stroke="#9a9a9a" stroke-width="0.6"/><rect x="0.5" y="3.6" width="14" height="9" rx="1.6" fill="url(#sf)"/><rect x="1.2" y="4.2" width="12.6" height="1" fill="#b8c4c8" opacity="0.7"/></svg>
<span class="t" style="left:91.70px;top:744px;font-size:11px;font-weight:400;color:#000;letter-spacing:0.797px;">Materials</span>
<svg style="left:74px;top:759px;" width="15" height="13" viewBox="0 0 15 13"><defs><linearGradient id="sf" x1="0" y1="0" x2="0" y2="1"><stop offset="0" stop-color="#7c888d"/><stop offset="1" stop-color="#434d52"/></linearGradient></defs><path d="M0.5 2 Q0.5 0.5 2 0.5 H5.5 L6.8 2 H13 Q14.5 2 14.5 3.5 V5 H0.5 Z" fill="#e2e2e2" stroke="#9a9a9a" stroke-width="0.6"/><rect x="0.5" y="3.6" width="14" height="9" rx="1.6" fill="url(#sf)"/><rect x="1.2" y="4.2" width="12.6" height="1" fill="#b8c4c8" opacity="0.7"/></svg>
<span class="t" style="left:91.70px;top:760px;font-size:11px;font-weight:400;color:#000;letter-spacing:0.686px;">Models</span>
<svg style="left:74px;top:775px;" width="15" height="13" viewBox="0 0 15 13"><defs><linearGradient id="sf" x1="0" y1="0" x2="0" y2="1"><stop offset="0" stop-color="#7c888d"/><stop offset="1" stop-color="#434d52"/></linearGradient></defs><path d="M0.5 2 Q0.5 0.5 2 0.5 H5.5 L6.8 2 H13 Q14.5 2 14.5 3.5 V5 H0.5 Z" fill="#e2e2e2" stroke="#9a9a9a" stroke-width="0.6"/><rect x="0.5" y="3.6" width="14" height="9" rx="1.6" fill="url(#sf)"/><rect x="1.2" y="4.2" width="12.6" height="1" fill="#b8c4c8" opacity="0.7"/></svg>
<span class="t" style="left:91.70px;top:776px;font-size:11px;font-weight:400;color:#000;letter-spacing:0.877px;">Prefabs</span>
<div style="left:176px;top:518px;width:14px;height:275px;background:linear-gradient(90deg,#c8c8c8,#d8d8d8 50%,#c4c4c4);border-left:1px solid #a8a8a8"></div>
<svg style="left:180px;top:524px;" width="7" height="5" viewBox="0 0 7 5"><path d="M0 4.8 L3.5 0 L7 4.8 Z" fill="#333"/></svg>
<div style="left:177px;top:536px;width:13px;height:181px;border-radius:7px;background:linear-gradient(90deg,#9aaccb,#7f95b8 50%,#5f7397);border:1px solid #5a6d8c"></div>
<div style="left:177px;top:710px;width:13px;height:64px;border-radius:0 0 7px 7px;background:linear-gradient(90deg,#d9d9d9,#ededed 50%,#d0d0d0);box-shadow:0 1px 1px #999"></div>
<div style="left:177px;top:536px;width:13px;height:181px;border-radius:7px;background:linear-gradient(90deg,#9aaccb,#7f95b8 50%,#5f7397);border:1px solid #5a6d8c"></div>
<svg style="left:180px;top:782px;" width="7" height="5" viewBox="0 0 7 5"><path d="M0 0 L3.5 4.8 L7 0 Z" fill="#333"/></svg>
<div style="left:190px;top:518px;width:739px;height:275px;background:#c2c2c2"></div>
<div style="left:190px;top:518px;width:739px;height:17px;background:#dedede"></div>
<div style="left:190px;top:535px;width:739px;height:1px;background:#a6a6a6"></div>
<span class="t" style="left:197.40px;top:521px;font-size:11px;font-weight:400;color:#000;letter-spacing:0.694px;">Assets</span>
<svg style="left:241px;top:524px;" width="6" height="7" viewBox="0 0 6 7"><path d="M0 0 L5.2 3.5 L0 7 Z" fill="#8a8a8a"/></svg>
<span class="t" style="left:252.40px;top:521px;font-size:11px;font-weight:400;color:#000;letter-spacing:0.859px;">Standard Assets</span>
<svg style="left:352px;top:524px;" width="6" height="7" viewBox="0 0 6 7"><path d="M0 0 L5.2 3.5 L0 7 Z" fill="#8a8a8a"/></svg>
<span class="t" style="left:363.10px;top:521px;font-size:11px;font-weight:400;color:#000;letter-spacing:0.987px;">Characters</span>
<svg style="left:432.4px;top:524px;" width="6" height="7" viewBox="0 0 6 7"><path d="M0 0 L5.2 3.5 L0 7 Z" fill="#8a8a8a"/></svg>
<span class="t" style="left:443.80px;top:521px;font-size:11px;font-weight:700;color:#000;letter-spacing:1.437px;">ThirdPersonCharacter</span>
<svg style="left:592.6px;top:524px;" width="6" height="7" viewBox="0 0 6 7"><path d="M0 0 L5.2 3.5 L0 7 Z" fill="#8a8a8a"/></svg>
<svg style="left:209px;top:553px;" width="62" height="50" viewBox="0 0 62 50"><defs><linearGradient id="bf" x1="0" y1="0" x2="0" y2="1"><stop offset="0" stop-color="#75838a"/><stop offset="1" stop-color="#535f66"/></linearGradient><linearGradient id="bt" x1="0" y1="0" x2="0" y2="1"><stop offset="0" stop-color="#f2f2f2"/><stop offset="1" stop-color="#c4c4c4"/></linearGradient></defs><path d="M2.5 6 Q2.5 2 6 2 H21 Q23 2 24.5 4 L26 5.5 H55 Q58 5.5 58 8.5 V14 H2.5 Z" fill="url(#bt)"/><path d="M2.5 13 Q2.5 11 4.5 11 H22 L25 8.5 H56 Q58 8.5 58 10.5 V43 Q58 46 55 46 H5.5 Q2.5 46 2.5 43 Z" fill="url(#bf)"/><path d="M2.5 43 Q2.5 46 5.5 46 H55 Q58 46 58 43 V46.8 Q58 47.8 55 47.8 H5.5 Q2.5 47.8 2.5 46.8 Z" fill="#3d464b" opacity="0.5"/><path d="M2.5 12 H56 Q58 12 58 14 V20 L22 46 H5.5 Q2.5 46 2.5 43 Z" fill="#fff" opacity="0.05"/></svg>
<span class="t" style="left:213.00px;top:613px;font-size:10px;font-weight:400;color:#000;letter-spacing:0.791px;">Animation</span>
<svg style="left:285px;top:553px;" width="62" height="50" viewBox="0 0 62 50"><defs><linearGradient id="bf" x1="0" y1="0" x2="0" y2="1"><stop offset="0" stop-color="#75838a"/><stop offset="1" stop-color="#535f66"/></linearGradient><linearGradient id="bt" x1="0" y1="0" x2="0" y2="1"><stop offset="0" stop-color="#f2f2f2"/><stop offset="1" stop-color="#c4c4c4"/></linearGradient></defs><path d="M2.5 6 Q2.5 2 6 2 H21 Q23 2 24.5 4 L26 5.5 H55 Q58 5.5 58 8.5 V14 H2.5 Z" fill="url(#bt)"/><path d="M2.5 13 Q2.5 11 4.5 11 H22 L25 8.5 H56 Q58 8.5 58 10.5 V43 Q58 46 55 46 H5.5 Q2.5 46 2.5 43 Z" fill="url(#bf)"/><path d="M2.5 43 Q2.5 46 5.5 46 H55 Q58 46 58 43 V46.8 Q58 47.8 55 47.8 H5.5 Q2.5 47.8 2.5 46.8 Z" fill="#3d464b" opacity="0.5"/><path d="M2.5 12 H56 Q58 12 58 14 V20 L22 46 H5.5 Q2.5 46 2.5 43 Z" fill="#fff" opacity="0.05"/></svg>
<span class="t" style="left:292.00px;top:613px;font-size:10px;font-weight:400;color:#000;letter-spacing:0.855px;">Animator</span>
<svg style="left:361px;top:553px;" width="62" height="50" viewBox="0 0 62 50"><defs><linearGradient id="bf" x1="0" y1="0" x2="0" y2="1"><stop offset="0" stop-color="#75838a"/><stop offset="1" stop-color="#535f66"/></linearGradient><linearGradient id="bt" x1="0" y1="0" x2="0" y2="1"><stop offset="0" stop-color="#f2f2f2"/><stop offset="1" stop-color="#c4c4c4"/></linearGradient></defs><path d="M2.5 6 Q2.5 2 6 2 H21 Q23 2 24.5 4 L26 5.5 H55 Q58 5.5 58 8.5 V14 H2.5 Z" fill="url(#bt)"/><path d="M2.5 13 Q2.5 11 4.5 11 H22 L25 8.5 H56 Q58 8.5 58 10.5 V43 Q58 46 55 46 H5.5 Q2.5 46 2.5 43 Z" fill="url(#bf)"/><path d="M2.5 43 Q2.5 46 5.5 46 H55 Q58 46 58 43 V46.8 Q58 47.8 55 47.8 H5.5 Q2.5 47.8 2.5 46.8 Z" fill="#3d464b" opacity="0.5"/><path d="M2.5 12 H56 Q58 12 58 14 V20 L22 46 H5.5 Q2.5 46 2.5 43 Z" fill="#fff" opacity="0.05"/></svg>
<span class="t" style="left:367.00px;top:613px;font-size:10px;font-weight:400;color:#000;letter-spacing:0.792px;">Materials</span>
<svg style="left:437px;top:553px;" width="62" height="50" viewBox="0 0 62 50"><defs><linearGradient id="bf" x1="0" y1="0" x2="0" y2="1"><stop offset="0" stop-color="#75838a"/><stop offset="1" stop-color="#535f66"/></linearGradient><linearGradient id="bt" x1="0" y1="0" x2="0" y2="1"><stop offset="0" stop-color="#f2f2f2"/><stop offset="1" stop-color="#c4c4c4"/></linearGradient></defs><path d="M2.5 6 Q2.5 2 6 2 H21 Q23 2 24.5 4 L26 5.5 H55 Q58 5.5 58 8.5 V14 H2.5 Z" fill="url(#bt)"/><path d="M2.5 13 Q2.5 11 4.5 11 H22 L25 8.5 H56 Q58 8.5 58 10.5 V43 Q58 46 55 46 H5.5 Q2.5 46 2.5 43 Z" fill="url(#bf)"/><path d="M2.5 43 Q2.5 46 5.5 46 H55 Q58 46 58 43 V46.8 Q58 47.8 55 47.8 H5.5 Q2.5 47.8 2.5 46.8 Z" fill="#3d464b" opacity="0.5"/><path d="M2.5 12 H56 Q58 12 58 14 V20 L22 46 H5.5 Q2.5 46 2.5 43 Z" fill="#fff" opacity="0.05"/></svg>
<span class="t" style="left:448.80px;top:613px;font-size:10px;font-weight:400;color:#000;letter-spacing:0.693px;">Models</span>
<svg style="left:513px;top:553px;" width="62" height="50" viewBox="0 0 62 50"><defs><linearGradient id="bf" x1="0" y1="0" x2="0" y2="1"><stop offset="0" stop-color="#75838a"/><stop offset="1" stop-color="#535f66"/></linearGradient><linearGradient id="bt" x1="0" y1="0" x2="0" y2="1"><stop offset="0" stop-color="#f2f2f2"/><stop offset="1" stop-color="#c4c4c4"/></linearGradient></defs><path d="M2.5 6 Q2.5 2 6 2 H21 Q23 2 24.5 4 L26 5.5 H55 Q58 5.5 58 8.5 V14 H2.5 Z" fill="url(#bt)"/><path d="M2.5 13 Q2.5 11 4.5 11 H22 L25 8.5 H56 Q58 8.5 58 10.5 V43 Q58 46 55 46 H5.5 Q2.5 46 2.5 43 Z" fill="url(#bf)"/><path d="M2.5 43 Q2.5 46 5.5 46 H55 Q58 46 58 43 V46.8 Q58 47.8 55 47.8 H5.5 Q2.5 47.8 2.5 46.8 Z" fill="#3d464b" opacity="0.5"/><path d="M2.5 12 H56 Q58 12 58 14 V20 L22 46 H5.5 Q2.5 46 2.5 43 Z" fill="#fff" opacity="0.05"/></svg>
<span class="t" style="left:523.80px;top:613px;font-size:10px;font-weight:400;color:#000;letter-spacing:0.555px;">Prefabs</span>
<svg style="left:589px;top:553px;" width="62" height="50" viewBox="0 0 62 50"><defs><linearGradient id="bf" x1="0" y1="0" x2="0" y2="1"><stop offset="0" stop-color="#75838a"/><stop offset="1" stop-color="#535f66"/></linearGradient><linearGradient id="bt" x1="0" y1="0" x2="0" y2="1"><stop offset="0" stop-color="#f2f2f2"/><stop offset="1" stop-color="#c4c4c4"/></linearGradient></defs><path d="M2.5 6 Q2.5 2 6 2 H21 Q23 2 24.5 4 L26 5.5 H55 Q58 5.5 58 8.5 V14 H2.5 Z" fill="url(#bt)"/><path d="M2.5 13 Q2.5 11 4.5 11 H22 L25 8.5 H56 Q58 8.5 58 10.5 V43 Q58 46 55 46 H5.5 Q2.5 46 2.5 43 Z" fill="url(#bf)"/><path d="M2.5 43 Q2.5 46 5.5 46 H55 Q58 46 58 43 V46.8 Q58 47.8 55 47.8 H5.5 Q2.5 47.8 2.5 46.8 Z" fill="#3d464b" opacity="0.5"/><path d="M2.5 12 H56 Q58 12 58 14 V20 L22 46 H5.5 Q2.5 46 2.5 43 Z" fill="#fff" opacity="0.05"/></svg>
<span class="t" style="left:600.50px;top:613px;font-size:10px;font-weight:400;color:#000;letter-spacing:0.956px;">Scripts</span>
<svg style="left:665px;top:553px;" width="62" height="50" viewBox="0 0 62 50"><defs><linearGradient id="bf" x1="0" y1="0" x2="0" y2="1"><stop offset="0" stop-color="#75838a"/><stop offset="1" stop-color="#535f66"/></linearGradient><linearGradient id="bt" x1="0" y1="0" x2="0" y2="1"><stop offset="0" stop-color="#f2f2f2"/><stop offset="1" stop-color="#c4c4c4"/></linearGradient></defs><path d="M2.5 6 Q2.5 2 6 2 H21 Q23 2 24.5 4 L26 5.5 H55 Q58 5.5 58 8.5 V14 H2.5 Z" fill="url(#bt)"/><path d="M2.5 13 Q2.5 11 4.5 11 H22 L25 8.5 H56 Q58 8.5 58 10.5 V43 Q58 46 55 46 H5.5 Q2.5 46 2.5 43 Z" fill="url(#bf)"/><path d="M2.5 43 Q2.5 46 5.5 46 H55 Q58 46 58 43 V46.8 Q58 47.8 55 47.8 H5.5 Q2.5 47.8 2.5 46.8 Z" fill="#3d464b" opacity="0.5"/><path d="M2.5 12 H56 Q58 12 58 14 V20 L22 46 H5.5 Q2.5 46 2.5 43 Z" fill="#fff" opacity="0.05"/></svg>
<span class="t" style="left:671.80px;top:613px;font-size:10px;font-weight:400;color:#000;letter-spacing:1.029px;">Textures</span>
<svg style="left:748px;top:548px;" width="46" height="61" viewBox="0 0 46 61"><defs><linearGradient id="dg" x1="0" y1="0" x2="1" y2="1"><stop offset="0" stop-color="#fafcfd"/><stop offset="1" stop-color="#dde4ea"/></linearGradient></defs><path d="M1.5 1.5 H35 L44 10 V58.5 H1.5 Z" fill="url(#dg)" stroke="#aeb6bc" stroke-width="0.8"/><path d="M35 1.5 L37 9 L44 10 Z" fill="#c9d1d7"/></svg>
<span class="t" style="left:753.00px;top:573.0px;font-size:9px;font-weight:700;color:#2a2a2a;font-family:'Liberation Serif', serif;transform:scaleX(0.708);transform-origin:0 0;">Neque porro</span>
<span class="t" style="left:753.00px;top:582.6px;font-size:9px;font-weight:700;color:#2a2a2a;font-family:'Liberation Serif', serif;transform:scaleX(0.741);transform-origin:0 0;">quisquam est</span>
<span class="t" style="left:753.00px;top:592.2px;font-size:9px;font-weight:700;color:#2a2a2a;font-family:'Liberation Serif', serif;transform:scaleX(0.725);transform-origin:0 0;">qui dolorem.</span>
<span class="t" style="left:740.10px;top:613px;font-size:10px;font-weight:400;color:#000;letter-spacing:0.387px;">ThirdPerso...</span>
<div style="left:190px;top:776px;width:739px;height:17px;background:#dedede;border-top:1px solid #a8a8a8"></div>
<svg style="left:196px;top:778px;" width="13" height="13" viewBox="0 0 13 13"><rect x="0.5" y="0.5" width="12" height="12" fill="#5d6d74" stroke="#4a5960" stroke-width="0.8"/><g fill="#c6d3d9"><rect x="1.6" y="1.6" width="4" height="4"/><rect x="7.4" y="1.6" width="4" height="4"/><rect x="7.4" y="7.4" width="4" height="4"/></g><path d="M4.5 8.5 L8.5 4.5" stroke="#a8b6bc" stroke-width="0.9"/><path d="M2 8.3 L2 12 L5 10.2 Z" fill="#fff"/></svg>
<span class="t" style="left:212.20px;top:780px;font-size:11px;font-weight:400;color:#000;letter-spacing:0.948px;">AsianBoyAnimController.controller</span>
<div style="left:858px;top:783px;width:55px;height:4px;background:linear-gradient(#7a7a7a,#9a9a9a);border-radius:2px;box-shadow:0 1px 0 #f0f0f0"></div>
<div style="left:885px;top:780px;width:10px;height:10px;border-radius:5px;background:linear-gradient(#fafafa,#d4d4d4);border:1px solid #555"></div>
<svg style="left:74px;top:789px;" width="15" height="13" viewBox="0 0 15 13"><defs><linearGradient id="sf" x1="0" y1="0" x2="0" y2="1"><stop offset="0" stop-color="#7c888d"/><stop offset="1" stop-color="#434d52"/></linearGradient></defs><path d="M0.5 2 Q0.5 0.5 2 0.5 H5.5 L6.8 2 H13 Q14.5 2 14.5 3.5 V5 H0.5 Z" fill="#e2e2e2" stroke="#9a9a9a" stroke-width="0.6"/><rect x="0.5" y="3.6" width="14" height="9" rx="1.6" fill="url(#sf)"/><rect x="1.2" y="4.2" width="12.6" height="1" fill="#b8c4c8" opacity="0.7"/></svg>
<div style="left:2px;top:793px;width:1272px;height:1px;background:#8a8a8a"></div>
<div style="left:2px;top:792px;width:174px;height:1px;background:#d4d4d4"></div>
<div style="left:2px;top:794px;width:1272px;height:21px;background:#a2a2a2"></div>
<div style="left:0px;top:0px;width:1px;height:816px;background:#0b1a2e"></div>
<div style="left:1px;top:1px;width:1px;height:815px;background:#2a8be8"></div>
<div style="left:0px;top:0px;width:1277px;height:1px;background:#0b1a2e"></div>
<div style="left:1px;top:1px;width:1274px;height:1px;background:#2a8be8"></div>
<div style="left:1274px;top:1px;width:1px;height:815px;background:#2a8be8"></div>
<div style="left:1px;top:815px;width:1274px;height:1px;background:#2a8be8"></div>
</body></html>
